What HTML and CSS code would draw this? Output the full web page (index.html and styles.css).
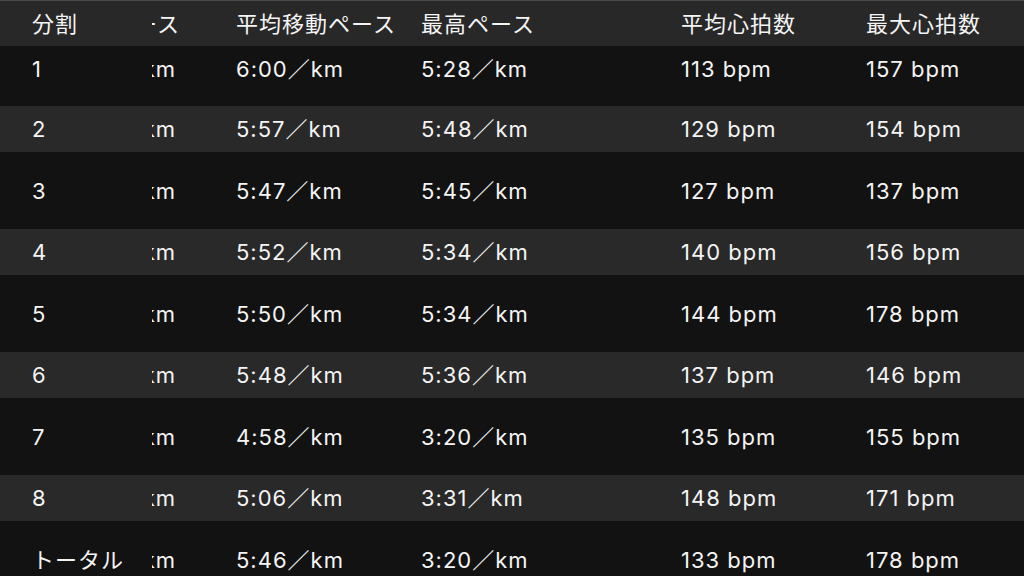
FILE: index.html
```html
<!DOCTYPE html>
<html lang="ja">
<head>
    <meta charset="UTF-8">
    <meta name="viewport" content="width=device-width, initial-scale=1.0">
    <title>分割</title>
    <link rel="stylesheet" href="styles.css">
</head>
<body>

    <div class="split-table">
        <div class="row header">
            <div class="cell first">分割</div>
            <div class="cell clipped"><span class="head-end">平均ペース</span></div>
            <div class="cell">平均移動ペース</div>
            <div class="cell">最高ペース</div>
            <div class="cell">平均心拍数</div>
            <div class="cell">最大心拍数</div>
        </div>
        <div class="row dark first-row">
            <div class="cell first">1</div>
            <div class="cell clipped"><span>1.00 km</span></div>
            <div class="cell">6:00／km</div>
            <div class="cell">5:28／km</div>
            <div class="cell">113 bpm</div>
            <div class="cell">157 bpm</div>
        </div>
        <div class="row gray">
            <div class="cell first">2</div>
            <div class="cell clipped"><span>1.00 km</span></div>
            <div class="cell">5:57／km</div>
            <div class="cell">5:48／km</div>
            <div class="cell">129 bpm</div>
            <div class="cell">154 bpm</div>
        </div>
        <div class="row dark tall">
            <div class="cell first">3</div>
            <div class="cell clipped"><span>1.00 km</span></div>
            <div class="cell">5:47／km</div>
            <div class="cell">5:45／km</div>
            <div class="cell">127 bpm</div>
            <div class="cell">137 bpm</div>
        </div>
        <div class="row gray">
            <div class="cell first">4</div>
            <div class="cell clipped"><span>1.00 km</span></div>
            <div class="cell">5:52／km</div>
            <div class="cell">5:34／km</div>
            <div class="cell">140 bpm</div>
            <div class="cell">156 bpm</div>
        </div>
        <div class="row dark tall">
            <div class="cell first">5</div>
            <div class="cell clipped"><span>1.00 km</span></div>
            <div class="cell">5:50／km</div>
            <div class="cell">5:34／km</div>
            <div class="cell">144 bpm</div>
            <div class="cell">178 bpm</div>
        </div>
        <div class="row gray">
            <div class="cell first">6</div>
            <div class="cell clipped"><span>1.00 km</span></div>
            <div class="cell">5:48／km</div>
            <div class="cell">5:36／km</div>
            <div class="cell">137 bpm</div>
            <div class="cell">146 bpm</div>
        </div>
        <div class="row dark tall">
            <div class="cell first">7</div>
            <div class="cell clipped"><span>1.00 km</span></div>
            <div class="cell">4:58／km</div>
            <div class="cell">3:20／km</div>
            <div class="cell">135 bpm</div>
            <div class="cell">155 bpm</div>
        </div>
        <div class="row gray">
            <div class="cell first">8</div>
            <div class="cell clipped"><span>1.00 km</span></div>
            <div class="cell">5:06／km</div>
            <div class="cell">3:31／km</div>
            <div class="cell">148 bpm</div>
            <div class="cell">171 bpm</div>
        </div>
        <div class="row dark tall">
            <div class="cell first">トータル</div>
            <div class="cell clipped"><span>8.00 km</span></div>
            <div class="cell">5:46／km</div>
            <div class="cell">3:20／km</div>
            <div class="cell">133 bpm</div>
            <div class="cell">178 bpm</div>
        </div>
    </div>

</body>
</html>
```

FILE: styles.css
```css
body {
    margin: 0;
    background-color: #121212;
    color: #f4f4f4;
    font-family: Inter, "Noto Sans CJK JP", sans-serif;
    font-size: 22px;
    line-height: 26px;
    letter-spacing: 1px;
    overflow: hidden;
}
.split-table {
    border-top: 1px solid #4a4a4a;
}
.row {
    display: grid;
    grid-template-columns: 152px 84px 185px 260px 185px 1fr;
    height: 46px;
}
.row.header {
    height: 45px;
    background-color: #282828;
}
.row.dark {
    background-color: #121212;
}
.row.gray {
    background-color: #292929;
}
.row.tall {
    height: 77px;
}
.row.first-row {
    height: 60px;
    padding-bottom: 14px;
    box-sizing: border-box;
}
.cell {
    display: flex;
    align-items: center;
    white-space: nowrap;
}
.cell.first {
    padding-left: 32px;
}
.cell.clipped {
    overflow: hidden;
    justify-content: flex-end;
    padding-right: 60px;
}
.cell.clipped .head-end {
    margin-right: -4px;
}
```
